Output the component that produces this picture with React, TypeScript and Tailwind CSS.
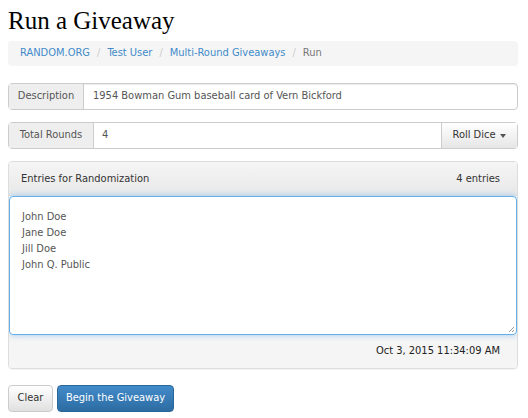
import React from 'react'

const font = { fontFamily: '"DejaVu Sans Condensed", "DejaVu Sans", Verdana, sans-serif' }

const crumbs = ['RANDOM.ORG', 'Test User', 'Multi-Round Giveaways']
const entries = ['John Doe', 'Jane Doe', 'Jill Doe', 'John Q. Public']

export default function App() {
  return (
    <div className="w-[528px] h-[418px] bg-white pl-2 pr-[10px] text-[11px] text-[#333]" style={font}>
      <h1 className="pt-[7px] font-['Liberation_Serif',serif] text-[25px] leading-[28px] text-black">
        Run a Giveaway
      </h1>

      <ol className="mt-[6px] flex h-[25px] items-center rounded bg-[#f5f5f5] px-3">
        {crumbs.map((c) => (
          <li key={c} className="flex items-center">
            <span className="text-[#428bca]">{c}</span>
            <span className="px-[7px] text-[#ccc]">/</span>
          </li>
        ))}
        <li className="text-[#777]">Run</li>
      </ol>

      <div className="mt-[17px] flex h-[27px] rounded border border-[#ccc] shadow-[inset_0_1px_1px_rgba(0,0,0,0.075)]">
        <span className="flex w-[75px] items-center justify-center border-r border-[#ccc] bg-[#eee] text-[#555]">
          Description
        </span>
        <span className="flex flex-1 items-center pl-[9px] text-[#555]">
          1954 Bowman Gum baseball card of Vern Bickford
        </span>
      </div>

      <div className="mt-[12px] flex h-[27px] rounded border border-[#ccc]">
        <span className="flex w-[85px] items-center justify-center border-r border-[#ccc] bg-[#eee] text-[#555]">
          Total Rounds
        </span>
        <span className="flex flex-1 items-center pl-[8px] text-[#555]">4</span>
        <button className="flex w-[76px] items-center justify-center gap-[5px] border-l border-[#ccc] bg-gradient-to-b from-white to-[#e6e6e6] text-[#333]">
          Roll Dice
          <span className="h-0 w-0 border-x-[3px] border-t-[4px] border-x-transparent border-t-[#555]" />
        </button>
      </div>

      <div className="mt-[12px] overflow-hidden rounded border border-[#ddd] shadow-[0_1px_1px_rgba(0,0,0,0.05)]">
        <div className="flex h-[34px] items-center justify-between bg-gradient-to-b from-[#f5f5f5] to-[#e8e8e8] pl-[12px] pr-[17px]">
          <span>Entries for Randomization</span>
          <span>4 entries</span>
        </div>
        <div className="relative h-[139px] rounded border border-[#66afe9] bg-white px-[12px] pt-[12px] shadow-[0_0_6px_rgba(102,175,233,0.6)]">
          {entries.map((e) => (
            <div key={e} className="leading-[16px] text-[#555]">
              {e}
            </div>
          ))}
          <svg className="absolute bottom-[1px] right-[1px]" width="8" height="8" viewBox="0 0 8 8">
            <path d="M7 2 L2 7 M7 5 L5 7" stroke="#999" strokeWidth="1" />
          </svg>
        </div>
        <div className="flex h-[33px] items-center justify-end bg-[#f5f5f5] pr-[17px] text-[#222]">
          Oct 3, 2015 11:34:09 AM
        </div>
      </div>

      <div className="mt-[16px] flex gap-[4px]">
        <button className="h-[27px] w-[45px] rounded border border-[#ccc] bg-gradient-to-b from-white to-[#e0e0e0] text-[#333]">
          Clear
        </button>
        <button className="h-[27px] w-[117px] rounded border border-[#2b669a] bg-gradient-to-b from-[#428bca] to-[#2d6ca2] text-white">
          Begin the Giveaway
        </button>
      </div>
    </div>
  )
}
